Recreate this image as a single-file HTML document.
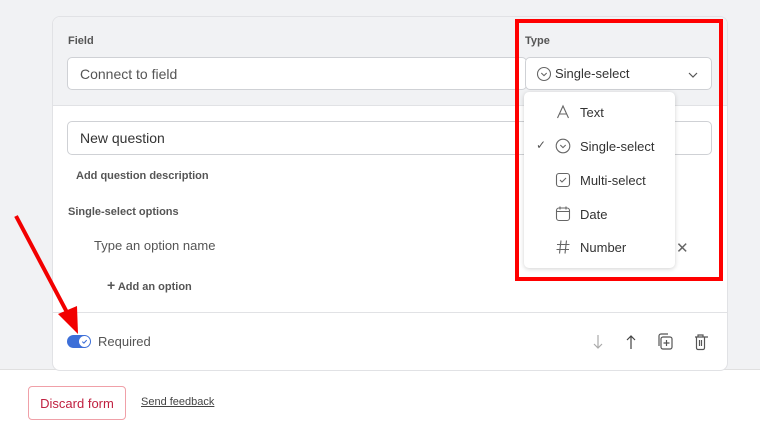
<!DOCTYPE html>
<html><head><style>
*{box-sizing:border-box;margin:0;padding:0}
body{width:760px;height:425px;position:relative;background:#fff;font-family:"Liberation Sans",sans-serif;overflow:hidden;color:#333}
.bg{position:absolute;left:0;top:0;width:760px;height:370px;background:#f1f2f4;border-bottom:1px solid #e0e0e0}
.card{position:absolute;left:52px;top:16px;width:676px;height:355px;background:#fff;border:1px solid #e1e2e5;border-radius:8px;overflow:hidden}
.head{position:absolute;left:0;top:0;width:100%;height:89px;background:#f1f2f4;border-bottom:1px solid #e1e2e5}
.lbl{position:absolute;font-size:11px;color:#555;font-weight:bold}
.inp{position:absolute;background:#fff;border:1px solid #cfd1d5;border-radius:5px;font-size:14px;color:#555;padding-left:12px;display:flex;align-items:center}
.t{position:absolute;font-size:13px;color:#555}
.dd{position:absolute;left:524px;top:92px;width:151px;height:176px;background:#fff;border-radius:5px;box-shadow:0 1px 5px rgba(0,0,0,.18)}
.it{position:absolute;left:0;width:100%;height:20px;font-size:13px;color:#333}
.it span{position:absolute;left:56px;top:3px}
.it svg{position:absolute;left:31px;top:2px}
</style></head><body>
<div class="bg"></div>
<div class="card">
 <div class="head"></div>
 <div class="lbl" style="left:15px;top:18px">Field</div>
 <div class="lbl" style="left:472px;top:18px">Type</div>
 <div class="inp" style="left:14px;top:40px;width:460px;height:33px">Connect to field</div>
 <div class="inp" style="left:472px;top:40px;width:187px;height:33px;color:#333;padding-left:10px;font-size:13px">
  <svg width="16" height="16" viewBox="0 0 16 16" style="margin-right:3px"><circle cx="8" cy="8" r="6.5" fill="none" stroke="#666" stroke-width="1.1"/><path d="M5.3 7l2.7 2.6L10.7 7" fill="none" stroke="#666" stroke-width="1.1"/></svg>Single-select
  <svg width="10" height="6" viewBox="0 0 10 6" style="position:absolute;right:13px;top:14px"><path d="M1 1l4 4 4-4" fill="none" stroke="#555" stroke-width="1.2"/></svg></div>
 <div class="inp" style="left:14px;top:104px;width:645px;height:34px;color:#333">New question</div>
 <div class="t" style="left:23px;top:153px;font-size:11px;font-weight:bold">Add question description</div>
 <div class="lbl" style="left:15px;top:189px">Single-select options</div>
 <div class="t" style="left:41px;top:221px">Type an option name</div>
 <div style="position:absolute;left:623px;top:222px;font-size:15px;color:#666">✕</div>
 <div class="t" style="left:54px;top:260px;font-size:11px;font-weight:bold"><span style="font-size:14px">+</span> Add an option</div>
 <div style="position:absolute;left:0;top:295px;width:100%;height:1px;background:#e1e2e5"></div>
 <div style="position:absolute;left:14px;top:318px;width:24px;height:13px;border-radius:7px;background:#3d6fd8"></div>
 <div style="position:absolute;left:26px;top:319px;width:11px;height:11px;border-radius:50%;background:#fff"></div>
 <svg width="11" height="11" viewBox="0 0 11 11" style="position:absolute;left:26px;top:319px"><path d="M3.3 5.6l1.6 1.5 2.8-3" fill="none" stroke="#3d6fd8" stroke-width="1.1"/></svg>
 <div class="t" style="left:45px;top:317px">Required</div>
 <svg width="130" height="20" viewBox="0 0 130 20" style="position:absolute;left:535px;top:315px" fill="none" stroke-width="1.2">
  <path d="M10 3v13M6 12l4 4 4-4" stroke="#aaa"/>
  <path d="M43 17V4M39 8l4-4 4 4" stroke="#444"/>
  <rect x="73" y="5" width="11" height="12" rx="2" stroke="#555"/><path d="M71 14V4a2 2 0 0 1 2-2h7M78.5 8v6M75.5 11h6" stroke="#555"/>
  <path d="M102 5h13M105 5V3h5v2M103.5 5v11a1.5 1.5 0 0 0 1.5 1.5h5a1.5 1.5 0 0 0 1.5-1.5V5M106.5 8v6M108.5 8v6" stroke="#555" transform="translate(5,0)"/>
 </svg>
</div>
<div class="dd">
 <div class="it" style="top:10px"><svg width="16" height="16" viewBox="0 0 16 16"><path d="M2.5 14L8 2l5.5 12M4.5 10h7" fill="none" stroke="#666" stroke-width="1.1"/></svg><span>Text</span></div>
 <div class="it" style="top:44px"><div style="position:absolute;left:12px;top:2px;font-size:12px;color:#555">✓</div><svg width="16" height="16" viewBox="0 0 16 16"><circle cx="8" cy="8" r="6.8" fill="none" stroke="#666" stroke-width="1.1"/><path d="M5.3 7l2.7 2.6L10.7 7" fill="none" stroke="#666" stroke-width="1.1"/></svg><span>Single-select</span></div>
 <div class="it" style="top:78px"><svg width="16" height="16" viewBox="0 0 16 16"><rect x="1.5" y="1.5" width="13" height="13" rx="2.5" fill="none" stroke="#666" stroke-width="1.1"/><path d="M5 8l2 2 4-4" fill="none" stroke="#666" stroke-width="1.1"/></svg><span>Multi-select</span></div>
 <div class="it" style="top:112px"><svg width="16" height="16" viewBox="0 0 16 16"><rect x="1.5" y="2" width="13" height="12.5" rx="2.5" fill="none" stroke="#666" stroke-width="1.1"/><path d="M1.5 5.5h13M5 0.5v3M11 0.5v3" fill="none" stroke="#666" stroke-width="1.1"/></svg><span>Date</span></div>
 <div class="it" style="top:145px"><svg width="16" height="16" viewBox="0 0 16 16"><path d="M6 1.5L4.5 14.5M11.5 1.5L10 14.5M2 5.5h12.5M1.5 10.5h12.5" fill="none" stroke="#666" stroke-width="1.1"/></svg><span>Number</span></div>
</div>
<div style="position:absolute;left:515px;top:19px;width:208px;height:262px;border:4px solid #ff0000"></div>
<svg width="100" height="130" style="position:absolute;left:0;top:210px"><path d="M16 6L70 108" stroke="#f20000" stroke-width="4"/><path d="M58 104L78 124L77 96Z" fill="#f20000"/></svg>
<div style="position:absolute;left:28px;top:386px;width:98px;height:34px;border:1px solid #f0a0a8;border-radius:4px;color:#c02040;font-size:13px;display:flex;align-items:center;justify-content:center">Discard form</div>
<div style="position:absolute;left:141px;top:396px;font-size:11px;color:#444;text-decoration:underline">Send feedback</div>
</body></html>
